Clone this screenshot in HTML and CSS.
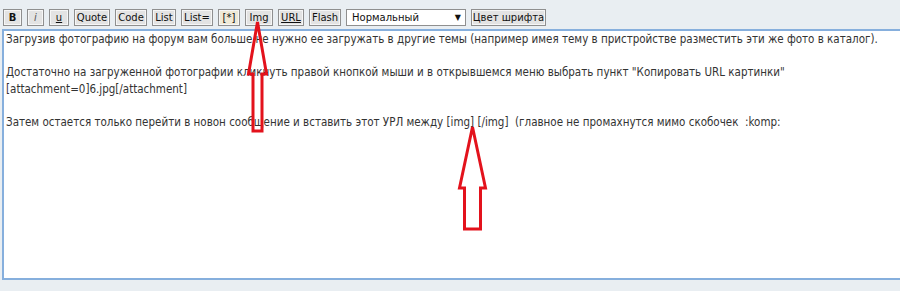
FILE: index.html
```html
<!DOCTYPE html>
<html lang="ru">
<head>
    <meta charset="UTF-8">
    <title>Редактор сообщения</title>
    <link rel="stylesheet" href="styles.css">
</head>
<body>
    <div class="toolbar">
        <button class="btn b w19">B</button>
        <button class="btn i w17">i</button>
        <button class="btn u w20">u</button>
        <button class="btn w36">Quote</button>
        <button class="btn w32">Code</button>
        <button class="btn w24">List</button>
        <button class="btn w32">List=</button>
        <button class="btn star w22">[*]</button>
        <button class="btn w28">Img</button>
        <button class="btn u w26">URL</button>
        <button class="btn w32">Flash</button>
        <div class="select">Нормальный<span class="caret">▼</span></div>
        <button class="btn w75">Цвет шрифта</button>
    </div>

    <div class="editor">
        <p>Загрузив фотографию на форум вам больше не нужно ее загружать в другие темы (например имея тему в пристройстве разместить эти же фото в каталог).</p>
        <p>&nbsp;</p>
        <p>Достаточно на загруженной фотографии кликнуть правой кнопкой мыши и в открывшемся меню выбрать пункт "Копировать URL картинки"</p>
        <p>[attachment=0]6.jpg[/attachment]</p>
        <p>&nbsp;</p>
        <p>Затем остается только перейти в новон сообщение и вставить этот УРЛ между [img] [/img] &nbsp;(главное не промахнутся мимо скобочек &nbsp;:komp:</p>
    </div>

    <!-- стрелки поверх скриншота -->
    <svg class="arrows" width="900" height="291" viewBox="0 0 900 291">
        <path d="M257.5 22 L266.5 74 L262 74 L262 131 L253 131 L253 74 L248.5 74 Z" />
        <path d="M472.5 127 L485.5 188 L480.5 188 L480.5 229 L464.5 229 L464.5 188 L459.5 188 Z" />
    </svg>
</body>
</html>
```

FILE: styles.css
```css
html { overflow: hidden; }
body {
    margin: 0;
    background: #e9eef2;
    font-family: "DejaVu Sans", Verdana, sans-serif;
    position: relative;
    height: 291px;
}
.toolbar {
    display: flex;
    align-items: center;
    gap: 5px;
    padding: 9px 0 0 3px;
    height: 17px;
}
.btn {
    font-family: "DejaVu Sans", Verdana, sans-serif;
    font-size: 10px;
    color: #111;
    background: #e3e3e3;
    border: 1px solid #8f8f8f;
    box-shadow: inset 0 0 0 1px #f6f6f6;
    height: 17px;
    padding: 0;
    margin: 0;
    line-height: 15px;
    text-align: center;
    white-space: nowrap;
    flex: none;
}
.w17 { width: 17px; }
.w19 { width: 19px; }
.w20 { width: 20px; }
.w22 { width: 22px; }
.w24 { width: 24px; }
.w26 { width: 26px; }
.w28 { width: 28px; }
.w32 { width: 32px; }
.w36 { width: 36px; }
.w75 { width: 75px; }
.b { font-weight: bold; }
.i { font-style: italic; color: #555; }
.u { text-decoration: underline; }
.star { background: #efe9d6; }
.select {
    box-sizing: border-box;
    width: 120px;
    height: 17px;
    background: #fff;
    border: 1px solid #8f8f8f;
    font-size: 10px;
    color: #111;
    line-height: 15px;
    padding-left: 5px;
    display: flex;
    justify-content: space-between;
    flex: none;
}
.caret { font-size: 8px; padding-right: 4px; }
.editor {
    margin: 3px 0 0 2px;
    width: 940px;
    height: 247px;
    background: #fff;
    border: 2px solid #86afdd;
    border-right: none;
    padding: 0 0 0 2px;
    font-family: "DejaVu Sans Condensed", "DejaVu Sans", sans-serif;
    font-size: 11.5px;
    line-height: 16.6px;
    color: #333;
}
.editor p { margin: 0; white-space: nowrap; }
.arrows {
    position: absolute;
    left: 0;
    top: 0;
    pointer-events: none;
}
.arrows path {
    fill: none;
    stroke: #e3121c;
    stroke-width: 3;
    stroke-linejoin: miter;
}
```
